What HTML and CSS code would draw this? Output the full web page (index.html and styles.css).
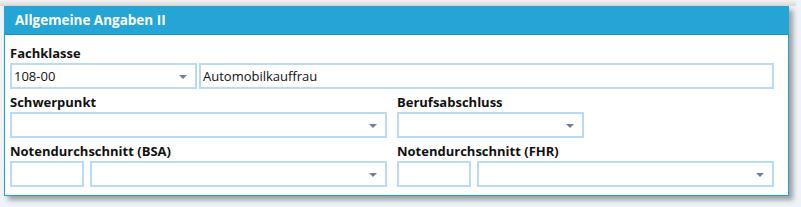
FILE: index.html
```html
<!DOCTYPE html>
<html lang="de">
<head>
<meta charset="utf-8">
<link rel="stylesheet" href="styles.css">
</head>
<body>
<div class="topstrip"></div>
<div class="panel">
  <div class="panel-head">Allgemeine Angaben II</div>
  <div class="panel-body">
    <div class="field">
      <div class="label">Fachklasse</div>
      <div class="row">
        <div class="box combo w-fach"><span class="val">108-00</span><span class="arrow"></span></div>
        <div class="box grow"><span class="val">Automobilkauffrau</span></div>
      </div>
    </div>
    <div class="cols">
      <div class="col">
        <div class="label">Schwerpunkt</div>
        <div class="row">
          <div class="box combo grow"><span class="arrow"></span></div>
        </div>
      </div>
      <div class="col">
        <div class="label">Berufsabschluss</div>
        <div class="row">
          <div class="box combo w-beruf"><span class="arrow"></span></div>
        </div>
      </div>
    </div>
    <div class="cols">
      <div class="col">
        <div class="label">Notendurchschnitt (BSA)</div>
        <div class="row gap6">
          <div class="box w-note"></div>
          <div class="box combo grow"><span class="arrow"></span></div>
        </div>
      </div>
      <div class="col">
        <div class="label">Notendurchschnitt (FHR)</div>
        <div class="row gap6">
          <div class="box w-note"></div>
          <div class="box combo grow"><span class="arrow"></span></div>
        </div>
      </div>
    </div>
  </div>
</div>
</body>
</html>
```

FILE: styles.css
```css
html, body {
  margin: 0;
  padding: 0;
}
body {
  background: #eef3f8;
  font-family: "Open Sans", "Noto Sans", "Liberation Sans", sans-serif;
  font-size: 12px;
  color: #111;
  width: 801px;
  height: 207px;
  overflow: hidden;
}
.topstrip {
  height: 6px;
  background: linear-gradient(#f2f2f2, #d8d8d8);
  width: 796px;
}
.panel {
  margin-left: 4px;
  width: 783px;
  height: 189px;
  border: 1px solid #1f9fd0;
  border-top: none;
  background: #fff;
  box-shadow: 4px 4px 5px rgba(0, 0, 0, 0.35);
  display: flex;
  flex-direction: column;
}
.panel-head {
  height: 28px;
  background: #24a5d5;
  border-bottom: 1px solid #1890c0;
  color: #fff;
  font-weight: bold;
  font-size: 13.5px;
  line-height: 28px;
  padding-left: 11px;
  margin: 0 -1px;
}
.panel-body {
  padding: 5px 14px 0 5px;
  display: flex;
  flex-direction: column;
}
.label {
  font-weight: bold;
  font-size: 13px;
  line-height: 16px;
  height: 16px;
  margin: 5px 0 2px;
}
.row {
  display: flex;
  gap: 2px;
}
.row.gap6 {
  gap: 6px;
}
.cols {
  display: grid;
  grid-template-columns: 377px 377px;
  column-gap: 10px;
}
.col {
  display: flex;
  flex-direction: column;
}
.box {
  box-sizing: border-box;
  height: 26px;
  border: 2px solid #b8daf3;
  background: #fff;
  display: flex;
  align-items: center;
  padding: 0 8px 0 2px;
  position: relative;
}
.grow {
  flex: 1;
}
.w-fach {
  width: 187px;
}
.w-beruf {
  width: 187px;
}
.w-note {
  width: 74px;
}
.val {
  font-size: 13px;
  line-height: 16px;
  color: #111;
  flex: 1;
}
.arrow {
  position: absolute;
  right: 8px;
  top: 10px;
  width: 0;
  height: 0;
  border-left: 4px solid transparent;
  border-right: 4px solid transparent;
  border-top: 4px solid #6d7f99;
}
```
